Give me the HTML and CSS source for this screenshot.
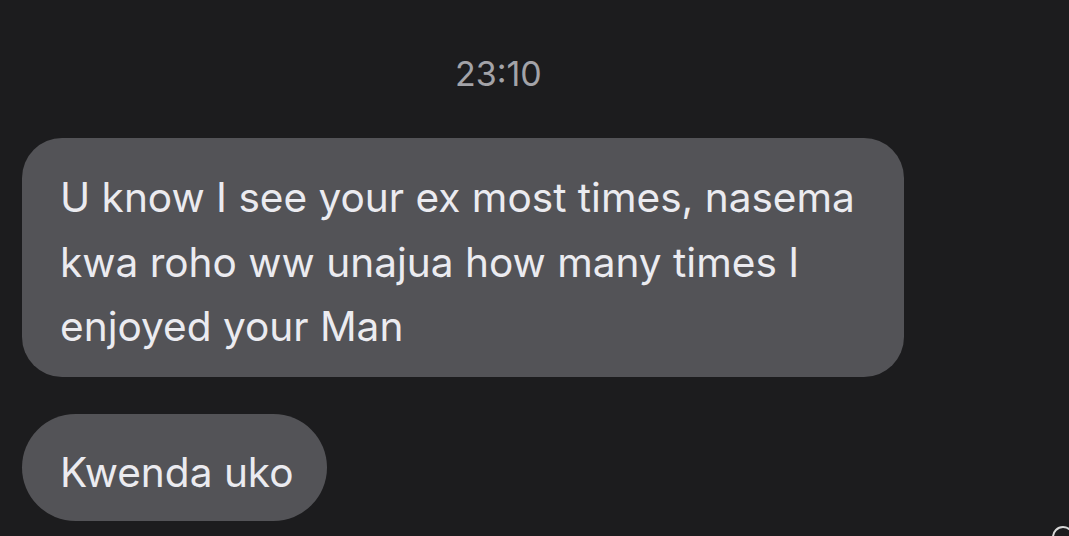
FILE: index.html
```html
<!DOCTYPE html>
<html>
<head>
<meta charset="utf-8">
<link rel="stylesheet" href="styles.css">
</head>
<body>
<div class="chat">
  <div class="time">23:10</div>
  <div class="bubble wide">U know I see your ex most times, nasema<br>kwa roho ww unajua how many times I<br>enjoyed your Man</div>
  <div class="bubble pill">Kwenda uko</div>
</div>
<div class="corner"></div>
</body>
</html>
```
FILE: styles.css
```css
html, body {
  margin: 0;
  padding: 0;
  background: #1c1c1e;
  width: 1069px;
  height: 536px;
  overflow: hidden;
}
body {
  font-family: Inter, "Noto Sans", sans-serif;
  color: #ebebf0;
  position: relative;
}
.chat {
  display: flex;
  flex-direction: column;
  align-items: flex-start;
  padding: 52px 0 0 22px;
}
.time {
  margin-left: 433px;
  font-size: 34px;
  line-height: 44px;
  color: #a3a3a8;
}
.bubble {
  background: #535357;
  font-size: 40.6px;
  line-height: 64.5px;
  box-sizing: border-box;
  white-space: nowrap;
}
.wide {
  margin-top: 42px;
  width: 882px;
  height: 239px;
  border-radius: 40px;
  padding: 28px 38px 0 38px;
}
.pill {
  margin-top: 37px;
  width: 305px;
  height: 107px;
  border-radius: 54px;
  padding: 27px 38px 0 38px;
}
.corner {
  position: absolute;
  left: 1052px;
  top: 526px;
  width: 22px;
  height: 22px;
  border-radius: 50%;
  border: 2px solid #d8d8d8;
  box-sizing: border-box;
}
```
